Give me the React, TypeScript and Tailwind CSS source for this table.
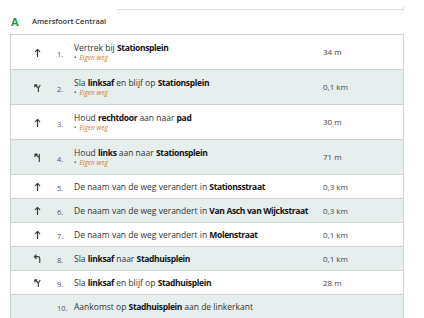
import type { ReactNode } from 'react'

type Icon = 'up' | 'forkLeft' | 'keepLeft' | 'turnLeft' | 'none'

type Step = {
    icon: Icon
    text: ReactNode
    eigen?: boolean
    dist?: string
}

const steps: Step[] = [
    { icon: 'up', text: <>Vertrek bij <b>Stationsplein</b></>, eigen: true, dist: '34 m' },
    { icon: 'forkLeft', text: <>Sla <b>linksaf</b> en blijf op <b>Stationsplein</b></>, eigen: true, dist: '0,1 km' },
    { icon: 'up', text: <>Houd <b>rechtdoor</b> aan naar <b>pad</b></>, eigen: true, dist: '30 m' },
    { icon: 'keepLeft', text: <>Houd <b>links</b> aan naar <b>Stationsplein</b></>, eigen: true, dist: '71 m' },
    { icon: 'up', text: <>De naam van de weg verandert in <b>Stationsstraat</b></>, dist: '0,3 km' },
    { icon: 'up', text: <>De naam van de weg verandert in <b>Van Asch van Wijckstraat</b></>, dist: '0,3 km' },
    { icon: 'up', text: <>De naam van de weg verandert in <b>Molenstraat</b></>, dist: '0,1 km' },
    { icon: 'turnLeft', text: <>Sla <b>linksaf</b> naar <b>Stadhuisplein</b></>, dist: '0,1 km' },
    { icon: 'forkLeft', text: <>Sla <b>linksaf</b> en blijf op <b>Stadhuisplein</b></>, dist: '28 m' },
    { icon: 'none', text: <>Aankomst op <b>Stadhuisplein</b> aan de linkerkant</> },
]

function Arrow({ kind }: { kind: Icon }) {
    if (kind === 'none') return null
    return (
        <svg viewBox="0 0 10 10" className="h-[9px] w-[9px]" fill="none" stroke="#3a3a3a" strokeWidth="1.3" strokeLinecap="round" strokeLinejoin="round">
            {kind === 'up' && <path d="M5 9.5V1.5M2.5 4L5 1.5 7.5 4" />}
            {kind === 'forkLeft' && <path d="M6 9.5V5.5L7.8 2.5M6 5.5L2.2 2M2 4.3V2H4.3" />}
            {kind === 'keepLeft' && <path d="M7 9.5V1.5M7 5L2.5 1.5M2.2 3.8V1.3H4.7" />}
            {kind === 'turnLeft' && <path d="M7.5 9.5V5A2 2 0 0 0 5.5 3H1.5M3.5 1L1.5 3 3.5 5" />}
        </svg>
    )
}

export default function App() {
    return (
        <div className="h-[318px] w-[424px] overflow-hidden bg-white font-['Open_Sans',sans-serif] text-[#333]">
            <div className="ml-[117px] mt-[6px] h-[4px] w-[287px] border-b border-r border-[#dedede]" />
            <div className="ml-[11px] mt-[5px] flex h-[14px] items-center">
                <span className="w-[21px] text-[11px] font-bold text-[#22993a]">A</span>
                <span className="text-[7.5px] font-semibold text-[#333]">Amersfoort Centraal</span>
            </div>
            <div className="ml-[10px] mt-[5px] w-[394px] border-x border-t border-[#cfd3d3]">
                {steps.map((s, i) => (
                    <div
                        key={i}
                        className={`flex items-center border-b border-[#cfd3d3] ${s.eigen ? 'h-[35px]' : 'h-[24px]'} ${i % 2 === 1 ? 'bg-[#e6eeee]' : 'bg-white'}`}
                    >
                        <div className="ml-[21px] flex w-[10px] justify-center">
                            <Arrow kind={s.icon} />
                        </div>
                        <div className="ml-[15px] mt-[5px] w-[17px] text-[7.5px] text-[#555]">{i + 1}.</div>
                        <div className="flex w-[249px] flex-col">
                            <div className="text-[8.5px] leading-[11px] [&_b]:font-bold [&_b]:tracking-[-0.35px] [&_b]:text-[#111]">{s.text}</div>
                            {s.eigen && (
                                <div className="flex items-center text-[6.5px] leading-[10px]">
                                    <span className="mr-[3px] text-[#555]">•</span>
                                    <span className="italic text-[#d9772e]">Eigen weg</span>
                                </div>
                            )}
                        </div>
                        <div className="text-[8px] text-[#444]">{s.dist}</div>
                    </div>
                ))}
            </div>
        </div>
    )
}
